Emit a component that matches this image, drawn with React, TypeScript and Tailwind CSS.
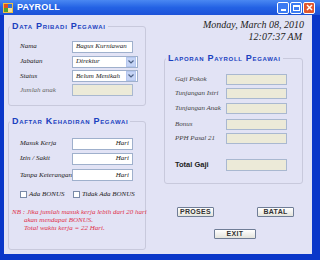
import React from 'react';

const label = "font-['Liberation_Serif',serif] italic text-[7px] leading-[9px] text-[#222] whitespace-nowrap";
const legend = "px-[2px] font-['Liberation_Sans',sans-serif] text-[9px] leading-[10px] tracking-[0.7px] text-[#1b3fc0] [font-variant:small-caps] font-bold whitespace-nowrap";
const box = "border border-[#c8c9dc] rounded-[3px] min-w-0";
const readOnly = "bg-[#ecead8] border border-[#a9b8d0]";

function TextBox({ value, right }: { value?: string; right?: boolean }) {
    return (
        <div className={`w-[61px] h-[12px] bg-white border border-[#9fb0cc] flex items-center px-[3px] ${right ? 'justify-end' : ''}`}>
            <span className={label}>{value}</span>
        </div>
    );
}

function Select({ value }: { value: string }) {
    return (
        <div className="w-[66px] h-[12px] bg-white border border-[#9fb0cc] flex items-center">
            <span className={`flex-1 px-[3px] ${label}`}>{value}</span>
            <span className="w-[10px] h-[10px] mr-[1px] bg-[#c5d4f5] border border-[#b4c6ee] flex items-center justify-center">
                <svg width="6" height="4" viewBox="0 0 6 4"><path d="M0.5 0.5 L3 3 L5.5 0.5" stroke="#4d6185" strokeWidth="1.2" fill="none" /></svg>
            </span>
        </div>
    );
}

function Btn({ text, w }: { text: string; w: number }) {
    return (
        <button
            className="h-[10px] border border-[#6f7d96] rounded-[1px] bg-gradient-to-b from-white to-[#e4e4dc] font-['Liberation_Sans',sans-serif] font-bold text-[7px] leading-[8px] text-[#333] tracking-[0.3px]"
            style={{ width: w }}
        >
            {text}
        </button>
    );
}

export default function App() {
    return (
        <div className="w-[320px] h-[260px] bg-[#0a37c9] flex flex-col overflow-hidden">
            {/* title bar */}
            <div className="h-[15px] bg-gradient-to-b from-[#4a88f2] via-[#2462e4] to-[#1c52d8] flex items-center pl-[3px] pr-[5px]">
                <svg width="10" height="10" viewBox="0 0 10 10">
                    <rect x="0" y="0" width="10" height="10" fill="#f0c040" />
                    <rect x="1" y="1" width="4" height="4" fill="#e05020" />
                    <rect x="5" y="1" width="4" height="4" fill="#3070e0" />
                    <rect x="1" y="5" width="4" height="4" fill="#50a030" />
                    <rect x="5" y="5" width="4" height="4" fill="#f8e090" />
                </svg>
                <span className="ml-[4px] font-['Liberation_Sans',sans-serif] font-bold text-[9px] text-white tracking-[0.2px]">PAYROLL</span>
                <div className="ml-auto flex gap-[1px]">
                    <div className="w-[12px] h-[12px] rounded-[2px] border border-white bg-[#3c7bf2] flex items-end justify-center pb-[2px]">
                        <div className="w-[5px] h-[2px] bg-white" />
                    </div>
                    <div className="w-[12px] h-[12px] rounded-[2px] border border-white bg-[#3c7bf2] flex items-center justify-center">
                        <div className="w-[7px] h-[6px] border border-white border-t-2" />
                    </div>
                    <div className="w-[12px] h-[12px] rounded-[2px] border border-white bg-[#e0562f] flex items-center justify-center">
                        <svg width="7" height="7" viewBox="0 0 7 7"><path d="M1 1 L6 6 M6 1 L1 6" stroke="white" strokeWidth="1.5" /></svg>
                    </div>
                </div>
            </div>

            {/* body */}
            <div className="ml-[4px] mr-[8px] h-[239px] bg-[#e2e3f5] flex gap-[18px] pl-[4px]">
                {/* left column */}
                <div className="w-[138px] flex flex-col">
                    <fieldset className={`${box} mt-[6px] h-[85px] pl-[11px]`}>
                        <legend className={`${legend} -ml-[10px]`}>Data Pribadi Pegawai</legend>
                        <div className="mt-[8px] flex flex-col">
                            <div className="flex items-center h-[15px]">
                                <span className={`w-[52px] ${label}`}>Nama</span>
                                <TextBox value="Bagus Kurniawan" />
                            </div>
                            <div className="flex items-center h-[15px]">
                                <span className={`w-[52px] ${label}`}>Jabatan</span>
                                <Select value="Direktur" />
                            </div>
                            <div className="flex items-center h-[14px]">
                                <span className={`w-[52px] ${label}`}>Status</span>
                                <Select value="Belum Menikah" />
                            </div>
                            <div className="flex items-center h-[14px]">
                                <span className={`w-[52px] ${label} text-[#666]`}>Jumlah anak</span>
                                <div className={`w-[61px] h-[12px] ${readOnly}`} />
                            </div>
                        </div>
                    </fieldset>

                    <fieldset className={`${box} mt-[10px] h-[134px] pl-[11px]`}>
                        <legend className={`${legend} -ml-[10px]`}>Daftar Kehadiran Pegawai</legend>
                        <div className="mt-[10px] flex flex-col">
                            <div className="flex items-center h-[15px]">
                                <span className={`w-[52px] ${label}`}>Masuk Kerja</span>
                                <TextBox value="Hari" right />
                            </div>
                            <div className="flex items-center h-[17px] pb-[2px]">
                                <span className={`w-[52px] ${label}`}>Izin / Sakit</span>
                                <TextBox value="Hari" right />
                            </div>
                            <div className="flex items-center h-[14px]">
                                <span className={`w-[52px] ${label}`}>Tanpa Keterangan</span>
                                <TextBox value="Hari" right />
                            </div>
                        </div>
                        <div className="mt-[7px] flex items-center h-[10px]">
                            <span className="w-[7px] h-[7px] border border-[#7a8aa8] bg-white" />
                            <span className={`ml-[2px] w-[44px] ${label}`}>Ada BONUS</span>
                            <span className="w-[7px] h-[7px] border border-[#7a8aa8] bg-white" />
                            <span className={`ml-[2px] ${label}`}>Tidak Ada BONUS</span>
                        </div>
                        <div className="mt-[9px] -ml-[8px] font-['Liberation_Serif',serif] italic text-[7px] leading-[8px] text-[#e0304a] whitespace-nowrap">
                            <div>NB : Jika jumlah masuk kerja lebih dari 20 hari</div>
                            <div className="pl-[12px]">akan mendapat BONUS.</div>
                            <div className="pl-[12px]">Total waktu kerja = 22 Hari.</div>
                        </div>
                    </fieldset>
                </div>

                {/* right column */}
                <div className="w-[139px] flex flex-col">
                    <div className="mt-[4px] -mr-[1px] text-right font-['Liberation_Serif',serif] italic text-[10px] leading-[12px] text-[#222] whitespace-nowrap">
                        <div>Monday, March 08, 2010</div>
                        <div className="pr-[2px]">12:07:37 AM</div>
                    </div>
                    <fieldset className={`${box} mt-[10px] h-[131px] pl-[10px]`}>
                        <legend className={`${legend} -ml-[9px]`}>Laporan Payroll Pegawai</legend>
                        <div className="mt-[9px] flex flex-col">
                            {[
                                ['Gaji Pokok', 'h-[14px]'],
                                ['Tunjangan Istri', 'h-[15px]'],
                                ['Tunjangan Anak', 'h-[15px]'],
                                ['Bonus', 'h-[16px]'],
                                ['PPH Pasal 21', 'h-[26px] pb-[13px]'],
                            ].map(([t, h]) => (
                                <div key={t} className={`flex items-center ${h}`}>
                                    <span className={`w-[51px] ${label} text-[#444]`}>{t}</span>
                                    <div className={`w-[61px] h-[11px] ${readOnly}`} />
                                </div>
                            ))}
                            <div className="flex items-center h-[13px]">
                                <span className="w-[51px] font-['Liberation_Sans',sans-serif] font-bold text-[7.5px] text-[#222]">Total Gaji</span>
                                <div className={`w-[61px] h-[12px] ${readOnly}`} />
                            </div>
                        </div>
                    </fieldset>
                    <div className="mt-[23px] flex justify-between pl-[13px] pr-[9px]">
                        <Btn text="PROSES" w={37} />
                        <Btn text="BATAL" w={37} />
                    </div>
                    <div className="mt-[12px] flex pl-[50px]">
                        <Btn text="EXIT" w={42} />
                    </div>
                </div>
            </div>
        </div>
    );
}
